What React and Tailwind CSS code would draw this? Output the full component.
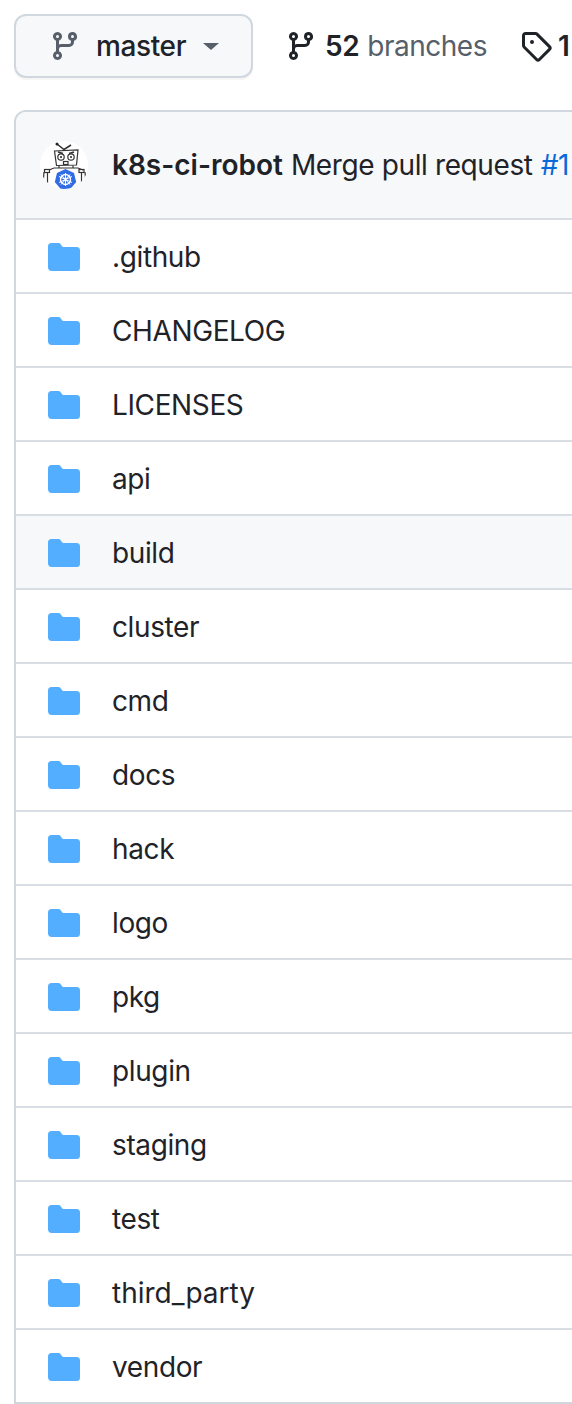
const branch = "M9.5 3.25a2.25 2.25 0 1 1 3 2.122V6A2.5 2.5 0 0 1 10 8.5H6a1 1 0 0 0-1 1v1.128a2.251 2.251 0 1 1-1.5 0V5.372a2.25 2.25 0 1 1 1.5 0v1.836A2.493 2.493 0 0 1 6 7h4a1 1 0 0 0 1-1v-.628A2.25 2.25 0 0 1 9.5 3.25Zm-6 0a.75.75 0 1 0 1.5 0 .75.75 0 0 0-1.5 0Zm8.25-.75a.75.75 0 1 0 0 1.5.75.75 0 0 0 0-1.5ZM4.25 12a.75.75 0 1 0 0 1.5.75.75 0 0 0 0-1.5Z";
const tag = "M1 7.775V2.75C1 1.784 1.784 1 2.75 1h5.025c.464 0 .91.184 1.238.513l6.25 6.25a1.75 1.75 0 0 1 0 2.474l-5.026 5.026a1.75 1.75 0 0 1-2.474 0l-6.25-6.25A1.752 1.752 0 0 1 1 7.775Zm1.5 0c0 .066.026.13.073.177l6.25 6.25a.25.25 0 0 0 .354 0l5.025-5.025a.25.25 0 0 0 0-.354l-6.25-6.25a.25.25 0 0 0-.177-.073H2.75a.25.25 0 0 0-.25.25ZM6 5a1 1 0 1 1 0 2 1 1 0 0 1 0-2Z";
const folder = "M1.75 1A1.75 1.75 0 0 0 0 2.75v10.5C0 14.216.784 15 1.75 15h12.5A1.75 1.75 0 0 0 16 13.25v-8.5A1.75 1.75 0 0 0 14.25 3H7.5a.25.25 0 0 1-.2-.1l-.9-1.2C6.07 1.26 5.55 1 5 1H1.75Z";

function Octicon({ d, className }) {
  return (
    <svg viewBox="0 0 16 16" className={className} fill="currentColor">
      <path fillRule="evenodd" d={d} />
    </svg>
  );
}

function Robot() {
  return (
    <svg viewBox="0 0 48 48" className="w-12 h-12 shrink-0 rounded-full bg-white">
      <g fill="none" stroke="#333" strokeWidth="1.2">
        <path d="M17 3 L24 8.5 L31 4" strokeWidth="1.5" />
        <path d="M14.5 10 L38 9 L36.5 24 L16.5 24.5 Z" />
        <circle cx="21" cy="16" r="3.2" />
        <circle cx="31" cy="16" r="3.2" />
        <rect x="23.5" y="20.5" width="4.5" height="3" />
        <path d="M18 11 L23 12.5 M34 11 L29 12.5" strokeWidth="1.6" />
        <path d="M19 24.5 V27 M33 24.5 V27 M9 29 L14 27 H38 L43 29" />
        <path d="M4 31 L3 44 M7.5 31 V45 M41.5 31 V45 M45 31 L46 43" />
        <rect x="4.5" y="28.5" width="5" height="3" />
        <rect x="39" y="28.5" width="5" height="3" />
      </g>
      <circle cx="17" cy="3" r="1.5" fill="#222" />
      <circle cx="21" cy="16" r="1" fill="#222" />
      <circle cx="31" cy="16" r="1" fill="#222" />
      <path d="M25.5 28 L34 32 L36.2 41 L30.3 48 L20.7 48 L14.8 41 L17 32 Z" fill="#326ce5" />
      <g fill="none" stroke="#fff" strokeWidth="1.4">
        <circle cx="25.5" cy="38.5" r="5" />
        <path d="M25.5 32 V45 M19 35.5 L32 41.5 M32 35.5 L19 41.5 M21 33.5 L30 43.5 M30 33.5 L21 43.5" strokeWidth="1" />
      </g>
    </svg>
  );
}

const rows = [".github", "CHANGELOG", "LICENSES", "api", "build", "cluster", "cmd", "docs", "hack", "logo", "pkg", "plugin", "staging", "test", "third_party", "vendor"];

export default function App() {
  return (
    <div className="w-[572px] h-[1404px] overflow-hidden bg-white text-[28px] leading-[42px] tracking-[-0.38px] text-[#1f2328] font-['Inter','Liberation_Sans',sans-serif]">
      <div className="flex items-center h-[110px] pl-[14px] pb-[18px] whitespace-nowrap">
        <div className="flex items-center shrink-0 w-[239px] h-16 pl-[33px] border-2 border-[#d0d7de] rounded-xl bg-[#f6f8fa] shadow-[0_2px_0_rgba(27,31,36,0.04)]">
          <Octicon d={branch} className="w-8 h-8 text-[#57606a] shrink-0" />
          <span className="ml-[15px] font-medium">master</span>
          <span className="ml-[17px] w-0 h-0 border-x-8 border-x-transparent border-t-[7px] border-t-[#57606a]" />
        </div>
        <Octicon d={branch} className="w-8 h-8 ml-[32px] shrink-0" />
        <span className="ml-[8px] font-semibold">52</span>
        <span className="ml-[8px] text-[#57606a] tracking-[-0.5px]">branches</span>
        <Octicon d={tag} className="w-8 h-8 ml-[33px] shrink-0" />
        <span className="ml-[6px] font-semibold">1</span>
      </div>
      <div className="ml-[14px] w-[600px] border-2 border-[#d0d7de] rounded-t-xl">
        <div className="flex items-center h-[106px] pl-6 bg-[#f6f8fa] rounded-t-[10px] whitespace-nowrap">
          <Robot />
          <span className="ml-6 font-semibold tracking-normal">k8s-ci-robot</span>
          <span className="ml-[8px]">Merge pull request</span>
          <span className="ml-[8px] text-[#0969da]">#1</span>
        </div>
        {rows.map((name) => (
          <div key={name} className={`flex items-center h-[74px] pl-[32px] border-t-2 border-[#d8dee4] ${name === "build" ? "bg-[#f6f8fa]" : ""}`}>
            <Octicon d={folder} className="w-8 h-8 mt-[2px] text-[#54aeff] shrink-0" />
            <span className={`ml-8 pt-[2px] ${name === "third_party" ? "tracking-normal" : ""}`}>{name}</span>
          </div>
        ))}
      </div>
    </div>
  );
}
